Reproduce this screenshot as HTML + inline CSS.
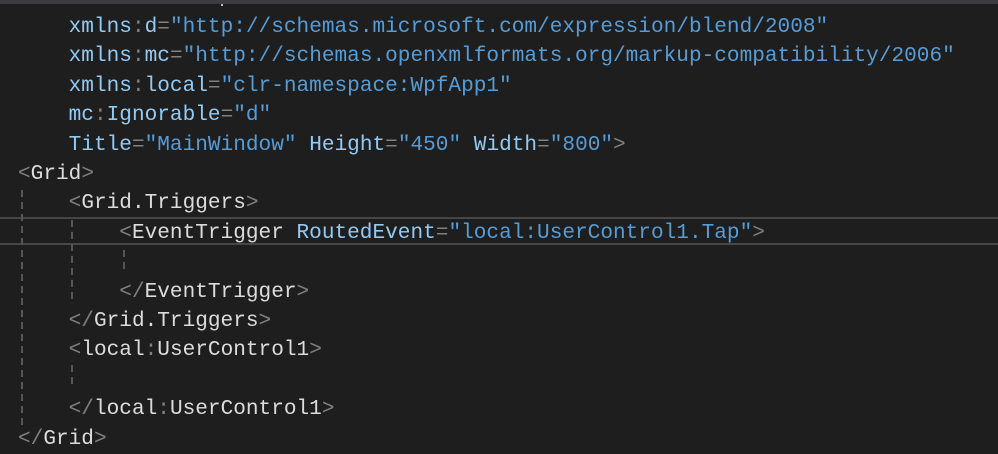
<!DOCTYPE html>
<html><head><style>
body{margin:0;width:998px;height:451px;background:#1e1e1e;overflow:hidden;position:relative;font-family:"Liberation Mono",monospace;font-size:21.1px;}
.top{position:absolute;left:0;top:0;width:998px;height:4px;background:#3c3c40}
.code{position:absolute;left:18px;top:13px;white-space:pre;line-height:29.4px;color:#dcdcdc}
.a{color:#92caf4}.v{color:#569cd6}.p{color:#808080}.e{color:#dcdcdc}
.hl{position:absolute;left:0;top:217px;width:998px;height:24px;border-top:2px solid #464646;border-bottom:2px solid #464646}
.g{position:absolute;width:2px;background:repeating-linear-gradient(to bottom,#555 0 7px,transparent 7px 12px)}
</style></head><body>
<div class="top"></div>
<div class="hl"></div>
<div class="g" style="left:21px;top:190px;height:236px"></div>
<div class="g" style="left:71px;top:220px;height:84px"></div>
<div class="g" style="left:123px;top:250px;height:22px"></div>
<div class="g" style="left:71px;top:365px;height:24px"></div>
<div style="position:absolute;left:221px;top:4px;width:2px;height:2px;background:#92caf4"></div>
<div class="code"><span class="a">    xmlns</span><span class="p">:</span><span class="a">d</span><span class="p">=</span><span class="v">"http://schemas.microsoft.com/expression/blend/2008"</span>
<span class="a">    xmlns</span><span class="p">:</span><span class="a">mc</span><span class="p">=</span><span class="v">"http://schemas.openxmlformats.org/markup-compatibility/2006"</span>
<span class="a">    xmlns</span><span class="p">:</span><span class="a">local</span><span class="p">=</span><span class="v">"clr-namespace:WpfApp1"</span>
<span class="a">    mc</span><span class="p">:</span><span class="a">Ignorable</span><span class="p">=</span><span class="v">"d"</span>
<span class="a">    Title</span><span class="p">=</span><span class="v">"MainWindow"</span> <span class="a">Height</span><span class="p">=</span><span class="v">"450"</span> <span class="a">Width</span><span class="p">=</span><span class="v">"800"</span><span class="p">&gt;</span>
<span class="p">&lt;</span>Grid<span class="p">&gt;</span>
    <span class="p">&lt;</span>Grid.Triggers<span class="p">&gt;</span>
        <span class="p">&lt;</span>EventTrigger <span class="a">RoutedEvent</span><span class="p">=</span><span class="v">"local:UserControl1.Tap"</span><span class="p">&gt;</span>

        <span class="p">&lt;/</span>EventTrigger<span class="p">&gt;</span>
    <span class="p">&lt;/</span>Grid.Triggers<span class="p">&gt;</span>
    <span class="p">&lt;</span>local<span class="p">:</span>UserControl1<span class="p">&gt;</span>

    <span class="p">&lt;/</span>local<span class="p">:</span>UserControl1<span class="p">&gt;</span>
<span class="p">&lt;/</span>Grid<span class="p">&gt;</span></div>
</body></html>
